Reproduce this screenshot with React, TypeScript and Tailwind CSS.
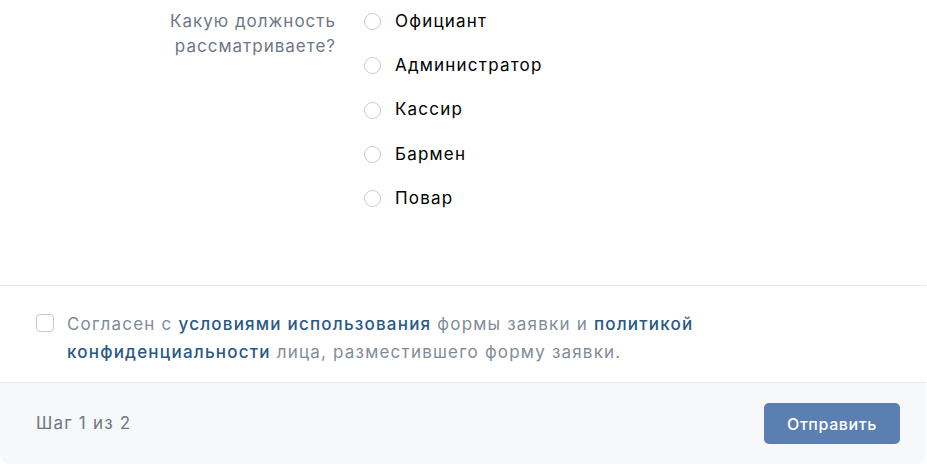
const positions = ['Официант', 'Администратор', 'Кассир', 'Бармен', 'Повар']

function Radio({ label }: { label: string }) {
  return (
    <label className="flex items-center h-[25px] cursor-pointer">
      <span className="w-[17px] h-[17px] rounded-full border border-[#c3cad3] bg-white shrink-0" />
      <span className="ml-[14px] text-[17px] tracking-[1.2px] text-black">{label}</span>
    </label>
  )
}

export default function App() {
  return (
    <div className="w-[926px] h-[464px] bg-white flex flex-col" style={{ fontFamily: 'Inter, "Liberation Sans", Arial, sans-serif' }}>
      {/* Question */}
      <div className="h-[286px] border-b border-[#e7e8ec] flex pt-[9px] shrink-0">
        <div className="w-[336px] text-right text-[17px] tracking-[1px] leading-[25px] text-[#6d7885]">
          Какую должность<br />рассматриваете?
        </div>
        <div className="ml-[28px] flex flex-col gap-[19.25px]">
          {positions.map(p => (
            <Radio key={p} label={p} />
          ))}
        </div>
      </div>

      {/* Agreement */}
      <div className="h-[97px] border-b border-[#e7e8ec] flex items-start pl-[36px] pt-[24px] shrink-0">
        <span className="mt-[4px] w-[18px] h-[18px] rounded-[4px] border border-[#c3cad3] bg-white shrink-0" />
        <p className="ml-[13px] text-[17px] tracking-[1.2px] leading-[28px] text-[#818c99]">
          Согласен с <span className="text-[#2a5885] font-medium">условиями использования</span> формы заявки и{' '}
          <span className="text-[#2a5885] font-medium">политикой</span>
          <br />
          <span className="text-[#2a5885] font-medium">конфиденциальности</span> лица, разместившего форму заявки.
        </p>
      </div>

      {/* Footer */}
      <div className="flex-1 bg-[#f7f8fa] rounded-b-[10px] flex items-center justify-between pl-[36px] pr-[26px]">
        <span className="text-[17px] tracking-[1.2px] text-[#6d7885]">Шаг 1 из 2</span>
        <button className="w-[136px] h-[41px] rounded-[5px] bg-[#5b7fb1] text-white text-[16px] tracking-[0.6px] font-medium">
          Отправить
        </button>
      </div>
    </div>
  )
}
